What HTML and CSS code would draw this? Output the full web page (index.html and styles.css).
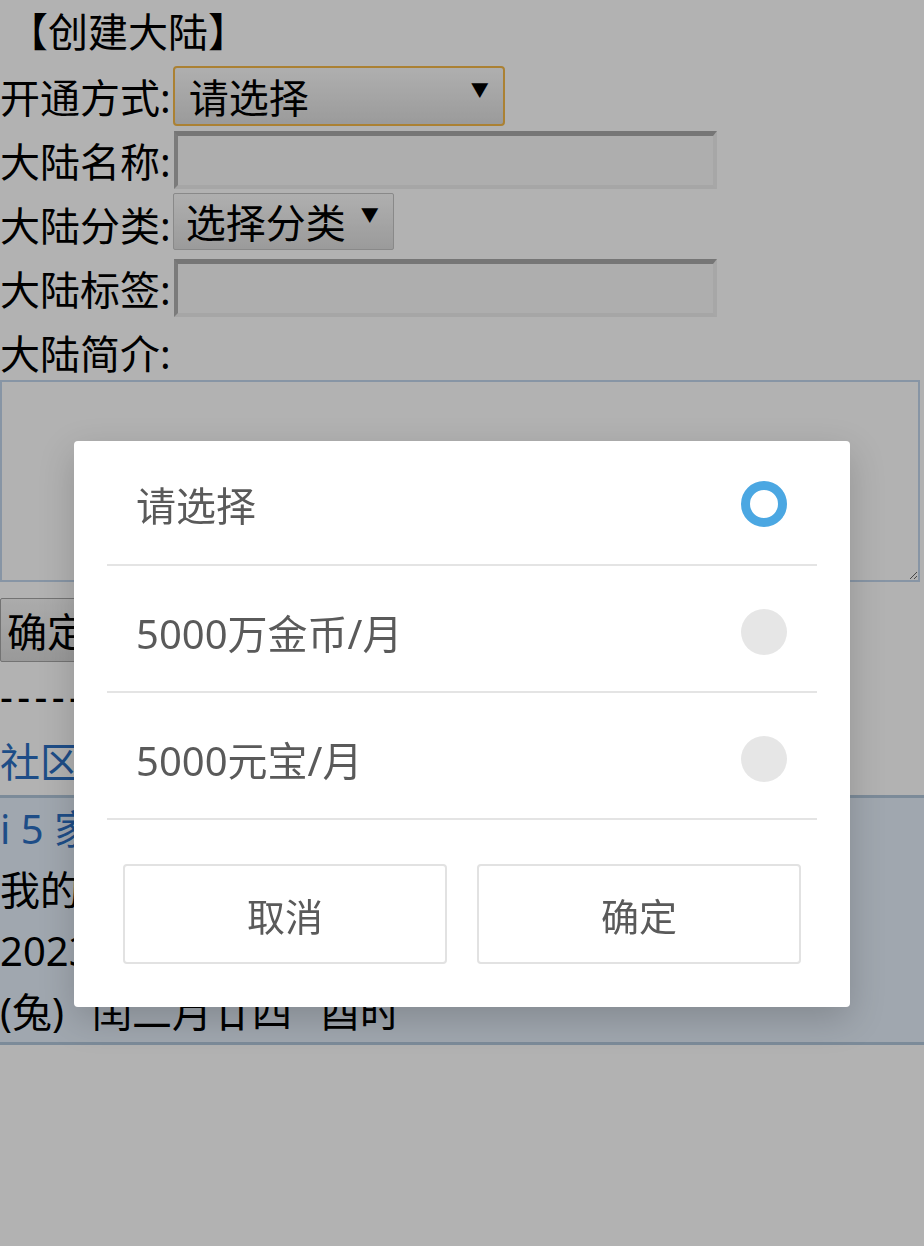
FILE: index.html
```html
<!DOCTYPE html>
<html lang="zh-CN">
<head>
    <meta charset="UTF-8">
    <meta name="viewport" content="width=device-width, initial-scale=1.0">
    <title>创建大陆</title>
    <link rel="stylesheet" href="styles.css">
</head>
<body>
    <div class="page">
        <div class="title">【创建大陆】</div>
        <div class="row">
            开通方式:<div class="select focus"><span>请选择</span><span class="arrow">▼</span></div>
        </div>
        <div class="row">
            大陆名称:<div class="field"></div>
        </div>
        <div class="row">
            大陆分类:<div class="select small"><span>选择分类</span><span class="arrow">▼</span></div>
        </div>
        <div class="row">
            大陆标签:<div class="field"></div>
        </div>
        <div class="row last">大陆简介:</div>
        <textarea class="intro"></textarea>
        <div class="submit-line">
            <button class="submit">确定创建</button>
        </div>
        <div class="dashes">- - - - - - - - - - - -</div>
        <div class="crumb"><a href="#">社区</a>&gt;<a href="#">大陆列表</a></div>
        <div class="footer">
            <div><a href="#">i 5 家园</a></div>
            <div>我的地盘 | 消息(0)</div>
            <div>2023-04-14 星期五</div>
            <div>(兔)<span class="gap">闰二月廿四</span><span class="gap">酉时</span></div>
        </div>
    </div>

    <div class="mask"></div>

    <div class="dialog">
        <div class="option">
            <span>请选择</span>
            <span class="radio checked"></span>
        </div>
        <div class="option">
            <span>5000万金币/月</span>
            <span class="radio"></span>
        </div>
        <div class="option">
            <span>5000元宝/月</span>
            <span class="radio"></span>
        </div>
        <div class="actions">
            <button class="btn">取消</button>
            <button class="btn">确定</button>
        </div>
    </div>
</body>
</html>
```

FILE: styles.css
```css
* {
    box-sizing: border-box;
}

body {
    margin: 0;
    background: #fff;
    color: #000;
    font-family: "Noto Sans", "Noto Sans CJK SC", sans-serif;
    font-size: 40px;
    height: 1246px;
    overflow: hidden;
}

a {
    color: #2c6fc2;
    text-decoration: none;
}

.title {
    height: 64px;
    line-height: 64px;
    padding-left: 8px;
}

.row {
    height: 64px;
    display: flex;
    align-items: center;
    white-space: nowrap;
}

.row.last {
    height: 60px;
    padding-top: 4px;
}

.select {
    display: flex;
    align-items: center;
    justify-content: space-between;
    margin-left: 2px;
    padding: 0 14px 0 14px;
    background: linear-gradient(#fbfbfb, #dedede);
    border: 1px solid #c4c4c4;
    border-radius: 2px;
}

.select.focus {
    width: 332px;
    height: 60px;
    border: 2px solid #f5b94a;
    border-radius: 4px;
}

.select.small {
    width: 221px;
    height: 57px;
    margin-top: -6px;
    padding: 0 14px 0 12px;
}

.arrow {
    font-size: 18px;
    line-height: 1;
    margin-top: -12px;
}

.field {
    width: 543px;
    height: 58px;
    margin-left: 3px;
    background: #f9f9f9;
    border-style: solid;
    border-width: 5px 4px 4px 4px;
    border-color: #a9a9a9 #efefef #eeeeee #b0b0b0;
}

.intro {
    display: block;
    width: 920px;
    height: 202px;
    margin: 0;
    border: 2px solid #c2d6ec;
    background: #fff;
    resize: both;
}

.submit-line {
    padding-top: 16px;
}

.submit {
    height: 64px;
    padding: 0 6px;
    font-family: inherit;
    font-size: 40px;
    color: #000;
    background: linear-gradient(#f6f6f6, #dcdcdc);
    border: 1px solid #a5a5a5;
    border-radius: 2px;
}

.dashes {
    height: 68px;
    line-height: 68px;
    overflow: hidden;
    white-space: nowrap;
    word-spacing: -6px;
}

.crumb {
    height: 65px;
    line-height: 64px;
}

.footer {
    background: #e6f0fb;
    border-top: 3px solid #b2c8dc;
    border-bottom: 3px solid #b2c8dc;
    line-height: 61px;
    white-space: nowrap;
}

.gap {
    margin-left: 28px;
}

.mask {
    position: fixed;
    inset: 0;
    background: rgba(0, 0, 0, 0.3);
}

.dialog {
    position: absolute;
    top: 441px;
    left: 74px;
    width: 776px;
    height: 566px;
    background: #fff;
    border-radius: 4px;
    box-shadow: 0 12px 36px rgba(0, 0, 0, 0.18);
    color: #5a5a5a;
    font-family: "Noto Sans", "Noto Sans CJK SC", sans-serif;
}

.option {
    display: flex;
    align-items: center;
    justify-content: space-between;
    height: 127px;
    margin: 0 33px;
    padding: 6px 30px 0 29px;
    border-bottom: 2px solid #e4e4e4;
    font-size: 40px;
}

.option:first-child {
    height: 125px;
    padding-top: 2px;
}

.radio {
    width: 46px;
    height: 46px;
    border-radius: 50%;
    background: #e6e6e6;
}

.radio.checked {
    background: #fff;
    border: 9px solid #4ba7e2;
}

.actions {
    display: flex;
    gap: 30px;
    padding: 44px 49px 0 49px;
}

.btn {
    flex: 1;
    height: 100px;
    background: #fff;
    border: 2px solid #e2e2e2;
    border-radius: 4px;
    font-family: inherit;
    font-size: 38px;
    color: #5a5a5a;
}
```
